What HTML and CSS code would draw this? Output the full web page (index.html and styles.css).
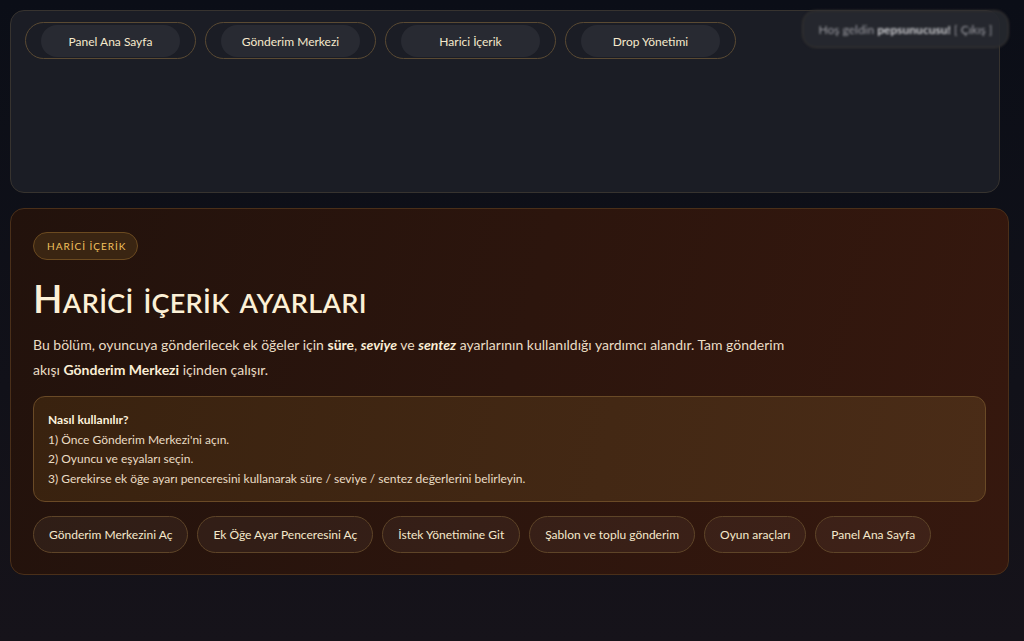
FILE: index.html
```html
<!DOCTYPE html>
<html lang="tr">
<head>
    <meta charset="UTF-8">
    <meta name="viewport" content="width=device-width, initial-scale=1.0">
    <title>Harici İçerik Ayarları</title>
    <link rel="stylesheet" href="styles.css">
</head>
<body>
    <div class="user-box"><span>Hoş geldin <b>pepsunucusu!</b> [ Çıkış ]</span></div>

    <header class="top-panel">
        <nav class="nav">
            <a href="#" class="nav-pill"><span>Panel Ana Sayfa</span></a>
            <a href="#" class="nav-pill"><span>Gönderim Merkezi</span></a>
            <a href="#" class="nav-pill"><span>Harici İçerik</span></a>
            <a href="#" class="nav-pill"><span>Drop Yönetimi</span></a>
        </nav>
    </header>

    <main class="card">
        <span class="tag">HARİCİ İÇERİK</span>
        <h1>Harici içerik ayarları</h1>
        <p class="lead">
            Bu bölüm, oyuncuya gönderilecek ek öğeler için <b>süre</b>, <b><i>seviye</i></b> ve <b><i>sentez</i></b>
            ayarlarının kullanıldığı yardımcı alandır. Tam gönderim akışı <b>Gönderim Merkezi</b> içinden çalışır.
        </p>

        <div class="howto">
            <strong>Nasıl kullanılır?</strong>
            <div>1) Önce Gönderim Merkezi'ni açın.</div>
            <div>2) Oyuncu ve eşyaları seçin.</div>
            <div>3) Gerekirse ek öğe ayarı penceresini kullanarak süre / seviye / sentez değerlerini belirleyin.</div>
        </div>

        <div class="actions">
            <a href="#" class="btn">Gönderim Merkezini Aç</a>
            <a href="#" class="btn">Ek Öğe Ayar Penceresini Aç</a>
            <a href="#" class="btn">İstek Yönetimine Git</a>
            <a href="#" class="btn">Şablon ve toplu gönderim</a>
            <a href="#" class="btn">Oyun araçları</a>
            <a href="#" class="btn">Panel Ana Sayfa</a>
        </div>
    </main>
</body>
</html>
```

FILE: styles.css
```css
:root {
    --cream: #f6e9cc;
    --text: #eadcc4;
    --gold: #f2c25e;
    --line: #5e4428;
}
html, body {
    height: 100%;
}
body {
    margin: 0;
    padding: 10px 15px 0 10px;
    box-sizing: border-box;
    font-family: 'Lato', 'Open Sans', sans-serif;
    color: var(--text);
    background: linear-gradient(180deg, #0b0e17 0%, #111119 60%, #16131a 100%);
    position: relative;
}
a {
    text-decoration: none;
    color: inherit;
}

/* top navigation panel */
.top-panel {
    width: 990px;
    height: 183px;
    box-sizing: border-box;
    background: #1b1d25;
    border: 1px solid #37332f;
    border-radius: 14px;
    padding: 11px 14px;
}
.nav {
    display: flex;
    gap: 9px;
}
.nav-pill {
    width: 171px;
    height: 37px;
    box-sizing: border-box;
    border: 1px solid #5a4a33;
    border-radius: 19px;
    padding: 2px 15px 1px 15px;
    display: flex;
}
.nav-pill span {
    flex: 1;
    background: #282a32;
    border-radius: 16px;
    display: flex;
    align-items: center;
    justify-content: center;
    font-size: 12px;
    color: var(--cream);
}

/* welcome box, sits over the panel corner */
.user-box {
    position: absolute;
    top: 10px;
    left: 802px;
    width: 207px;
    height: 38px;
    box-sizing: border-box;
    border: 1px solid #3a3631;
    border-radius: 14px;
    background: rgba(38, 40, 47, 0.92);
    display: flex;
    align-items: center;
    justify-content: center;
    font-size: 12px;
    color: #9b9ba1;
    filter: blur(1.3px);
    z-index: 2;
}
.user-box b {
    color: #c9c9cd;
}

/* main content card */
.card {
    margin-top: 15px;
    width: 999px;
    height: 367px;
    box-sizing: border-box;
    border: 1px solid #4a2f19;
    border-radius: 14px;
    background: linear-gradient(105deg, #22120c 0%, #2c150d 50%, #36180e 100%);
    padding: 23px 22px;
}
.tag {
    display: inline-block;
    padding: 7px 11px 7px 13px;
    font-size: 10px;
    letter-spacing: 1px;
    color: var(--gold);
    background: #3a2512;
    border: 1px solid #6b4a20;
    border-radius: 14px;
}
h1 {
    margin: 18px 0 14px;
    font-size: 38.5px;
    font-weight: 600;
    font-variant: small-caps;
    color: #fcf0d6;
    letter-spacing: 0.3px;
    line-height: 40px;
}
.lead {
    margin: 0;
    max-width: 770px;
    font-size: 14px;
    line-height: 25px;
    color: var(--text);
}
.lead b {
    color: #fbeed6;
}

.howto {
    margin-top: 14px;
    border: 1px solid #6a4a26;
    border-radius: 12px;
    background: linear-gradient(100deg, #39220f 0%, #432814 60%, #4a2c17 100%);
    padding: 13px 14px 13px;
    font-size: 12px;
    line-height: 19.5px;
    color: var(--text);
}
.howto strong {
    display: block;
    color: #fdf2dc;
}

.actions {
    margin-top: 14px;
    display: flex;
    gap: 9px;
}
.btn {
    height: 37px;
    box-sizing: border-box;
    padding: 0 15px;
    display: flex;
    align-items: center;
    font-size: 12px;
    color: var(--cream);
    border: 1px solid var(--line);
    border-radius: 19px;
    background: rgba(255, 235, 210, 0.05);
}
```
